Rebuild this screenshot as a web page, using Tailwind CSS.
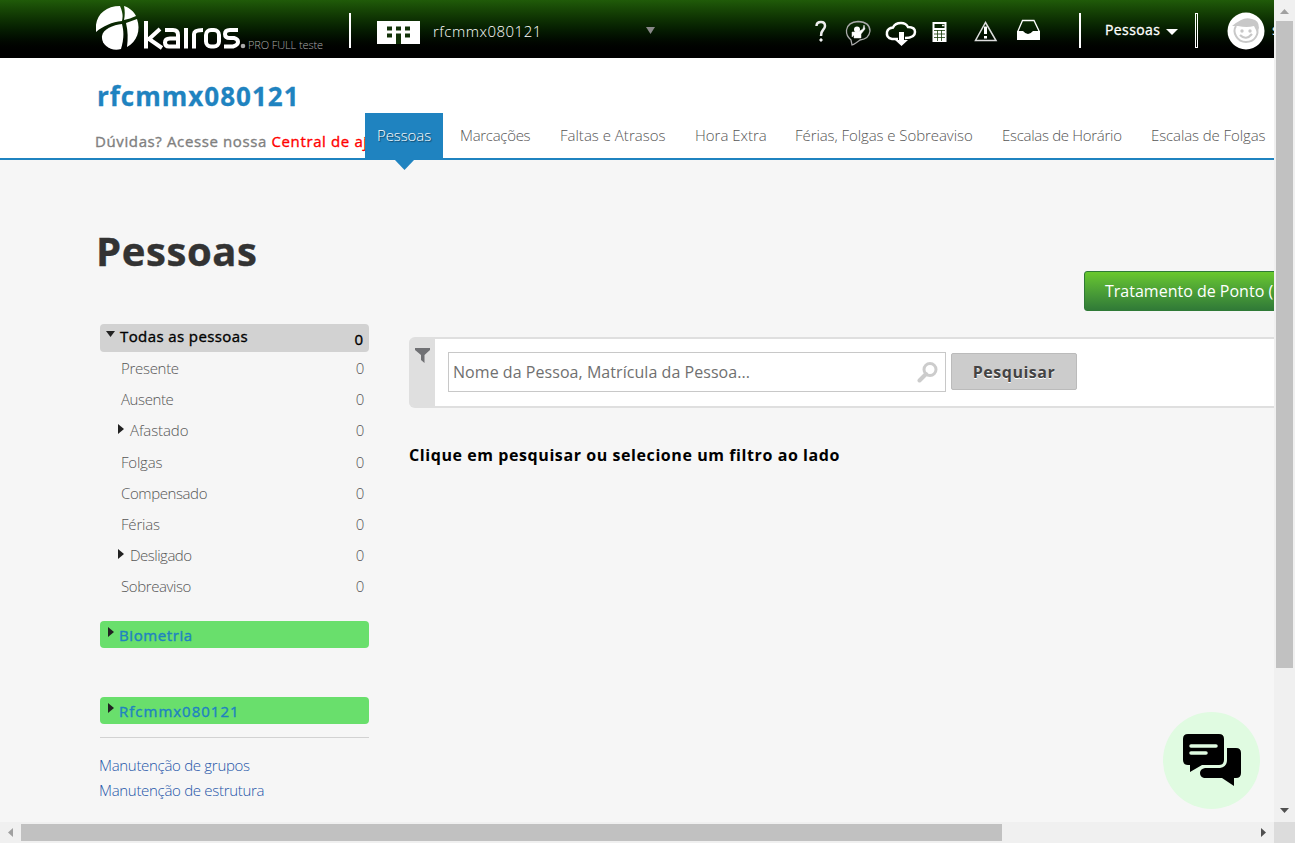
<!DOCTYPE html>
<html lang="pt-BR">
<head>
<meta charset="utf-8">
<title>Kairos - Pessoas</title>
<script src="https://cdn.jsdelivr.net/npm/@tailwindcss/browser@4"></script>
</head>
<body class="h-[843px] w-[1295px] overflow-hidden bg-[#f6f6f6] font-['Open_Sans','Noto_Sans',sans-serif]">
<div class="grid h-[843px] w-[1295px] grid-cols-[1274px_21px] grid-rows-[822px_21px] whitespace-nowrap">
  <div class="relative min-w-0 overflow-hidden">
    <header class="flex h-[58px] items-start overflow-hidden bg-linear-to-b from-[#205b09] to-black pl-24 text-white">
      <div class="flex w-[253px] shrink-0 items-start">
        <svg class="mt-[5px] h-[46px] w-[150px] shrink-0" viewBox="0 0 150 46" fill="none">
          <path d="M0 27C-2 12 8 1 24 1C27 8 27 11 26 16C16 17 7 21 0 27Z" fill="#fff"/>
          <path d="M28 1C34 3 38 7 40 11C36 13 32 14 28 15C29 10 29 6 28 1Z" fill="#fff"/>
          <path d="M26 19C28 27 28 34 25 44C15 47 5 40 6 31C7 24 17 20 26 19Z" fill="#fff"/>
          <path d="M30 18L41 14C45 25 41 37 31 42C32 34 32 26 30 18Z" fill="#fff"/>
          <g stroke="#fff" stroke-width="4">
            <path d="M50 16V43.500M64 24L53 34L66 43M69 25H77Q82 25 82 30V41.500H73Q69 41.500 69 37.500T74 33.500H82M90 23V43.500M98 43.500V29Q98 25 107 25"/>
            <rect x="110" y="25" width="13" height="16.500" rx="5"/>
            <path d="M142 25H134Q129 25 129 29T134 33H138Q142 34 142 37T137 41.500H128"/>
          </g>
          <circle cx="147" cy="41" r="2.300" fill="#aaa"/>
        </svg>
        <span class="mt-[37px] ml-0.5 text-[11px] leading-4 font-light tracking-[-0.1px] text-[#aaa]">PRO FULL teste</span>
      </div>
      <i class="mt-[13px] h-[35px] w-0.5 shrink-0 bg-white"></i>
      <svg class="mt-[21px] ml-[26px] h-[23px] w-[43px] shrink-0" viewBox="0 0 43 23"><rect width="43" height="23" fill="#fff"/><path fill="#123208" d="M10 5.500H15V9.500H10ZM19 5.500H24V9.500H19ZM28 5.500H33V9.500H28ZM10 12.500H15V16.500H10ZM28 12.500H33V16.500H28ZM19 12.500H24V23H19Z"/></svg>
      <span class="mt-[21px] ml-[13px] w-[213px] shrink-0 text-[15px] leading-5 font-light tracking-[0.5px]">rfcmmx080121</span>
      <svg class="mt-[27px] h-[7px] w-[9px] shrink-0" viewBox="0 0 9 7"><path d="M0 0H9L4.500 7Z" fill="#888"/></svg>
      <svg class="mt-[17px] mr-8 ml-[158px] h-[30px] w-[230px] shrink-0" viewBox="0 0 230 30" fill="none" stroke="#eee">
        <path d="M3.500 9Q3.500 5 8 5Q12 5 12 9Q12 11 10 13Q8 15 8 19" stroke-width="2.500"/><circle cx="8" cy="23" r="1.200" fill="#fff"/>
        <path d="M38 23Q33 19 33.500 13Q35 5 45 4.500Q57 5 57 14Q56 22 47 23Q42 27 39 28Z" stroke="#aaa" stroke-width="1.300"/><circle cx="44" cy="12.500" r="3" fill="#fff" stroke="none"/><path d="M39 15H45L50 12L51 8L52 12L48 17V21H41V18L39 20Z" fill="#fff" stroke-width=".5"/>
        <path d="M85 22H79Q73 21 74 15Q75 11 80 10.500Q82 6 88 6Q93 6 95 10Q102 10 102 15Q102 21 92 21" stroke="#fff" stroke-width="2.500"/><path d="M86 15H91V23H95L88.500 29L82 23H86Z" fill="#fff" stroke="none"/>
        <path d="M119.500 5H133.500V25H119.500ZM121.500 7V11H131.500V7Z" fill="#fff" fill-rule="evenodd" stroke="none"/><path d="M121 13.500H132M121 17H132M121 20.500H132M124.500 13V24M128.500 13V24" stroke="#163b08" stroke-width=".8"/><path d="M129 8.500H131.500" stroke-width="1.500"/>
        <path d="M172.500 5.500L183 23.500H162.500Z" stroke="#ddd" stroke-width="1.500"/><path d="M172.500 9.500V17M172.500 19V21.500" stroke="#fff" stroke-width="3"/>
        <path d="M205 14L209.500 3.500H221L226 14V22H205Z" stroke="#fff" stroke-width="1.300"/><path d="M204 14H210Q215 20 220 14H227V23H204Z" fill="#fff" stroke="none"/>
      </svg>
      <i class="mt-[13px] ml-1 h-[35px] w-0.5 shrink-0 bg-white"></i>
      <span class="mt-[20px] ml-6 w-[61px] shrink-0 text-[14px] leading-5 tracking-[0.4px] [-webkit-text-stroke:0.3px]">Pessoas</span>
      <svg class="mt-[29px] h-[6px] w-[12px] shrink-0" viewBox="0 0 12 6"><path d="M0 0H12L6 6Z" fill="#fff"/></svg>
      <i class="mt-[13px] ml-[17px] h-[35px] w-[3px] shrink-0 border border-white"></i>
      <svg class="mt-[12px] ml-[29px] size-[38px] shrink-0" viewBox="0 0 38 38" fill="none"><circle cx="19" cy="19" r="18.500" fill="#fff"/><path d="M5 14Q10 10 14 8Q19 5 25 7Q32 8 32 16L30 20L27 14Q20 16 11 14Z" fill="#c8c8c8"/><path d="M9 14C5 20 10 30 19 30C28 30 32 22 30 16" stroke="#c8c8c8" stroke-width="2"/><path d="M13 23Q19 29 25 22" stroke="#c8c8c8" stroke-width="2.200"/><circle cx="15" cy="19" r="1.700" fill="#c8c8c8"/><circle cx="23" cy="19" r="1.700" fill="#c8c8c8"/></svg>
      <span class="mt-[20px] ml-[7px] text-[14px] leading-5">s</span>
    </header>
    <div class="flex h-[102px] border-b-2 border-[#1f83c0] bg-white">
      <div class="w-[365px] shrink-0 overflow-hidden pl-[97px]">
        <h2 class="mt-[20px] text-[26px] leading-9 font-bold tracking-[1px] text-[#1f83c0] [-webkit-text-stroke:0.3px]">rfcmmx080121</h2>
        <p class="-ml-0.5 mt-[17px] text-[15px] leading-5 tracking-[0.62px] text-[#808080] [-webkit-text-stroke:0.35px]">Dúvidas? Acesse nossa <span class="text-[#f00]">Central de ajuda</span></p>
      </div>
      <nav class="mt-[55px] flex h-[45px] items-start text-[15px] leading-[45px] font-light text-[#555]">
        <a class="relative h-[45px] w-[78px] bg-[#1f83c0] pl-3 tracking-[-0.1px] text-white [text-shadow:1px_1px_1px_#0008]">Pessoas<svg class="absolute top-[45px] left-[29px] h-[12px] w-[21px]" viewBox="0 0 21 12"><path d="M0 1H21L10.500 12Z" fill="#1f83c0"/></svg></a>
        <a class="ml-[17px] w-[100px] tracking-[-0.3px]">Marcações</a>
        <a class="w-[135px]">Faltas e Atrasos</a>
        <a class="w-[100px]">Hora Extra</a>
        <a class="w-[207px] tracking-[-0.07px]">Férias, Folgas e Sobreaviso</a>
        <a class="w-[149px] tracking-[-0.3px]">Escalas de Horário</a>
        <a class="tracking-[-0.1px]">Escalas de Folgas</a>
      </nav>
    </div>
    <main class="flex">
      <aside class="ml-[97px] w-[272px] shrink-0">
        <h1 class="mt-[66px] -ml-px text-[40px] leading-[50px] font-bold tracking-[0.6px] text-[#333] [-webkit-text-stroke:0.4px]">Pessoas</h1>
        <div class="mt-[48px] ml-[3px] flex h-7 items-start rounded bg-[#d2d2d2] pr-1.5 pl-1.5 text-[15px] leading-[25px] text-black [-webkit-text-stroke:0.35px]">
          <svg class="mt-[7px] mr-[5px] h-[6px] w-[9px]" viewBox="0 0 9 6"><path d="M0 0H9L4.500 6Z" fill="#222"/></svg>
          <span class="flex-1 tracking-[0.4px]">Todas as pessoas</span><span class="mt-[3px]">0</span>
        </div>
        <ul class="mt-[1px] ml-6 pr-[5px] text-[15px] leading-[31.200px] font-light tracking-[-0.4px] text-[#555]">
          <li class="flex justify-between"><span class="tracking-[-0.3px]">Presente</span><span>0</span></li>
          <li class="flex justify-between"><span>Ausente</span><span>0</span></li>
          <li class="-ml-[3px] flex"><svg class="mt-[9px] mr-[6px] h-[10px] w-[6px]" viewBox="0 0 6 10"><path d="M0 0L6 5L0 10Z" fill="#222"/></svg><span class="flex-1 tracking-[-0.1px]">Afastado</span><span>0</span></li>
          <li class="flex justify-between"><span class="tracking-[-0.2px]">Folgas</span><span>0</span></li>
          <li class="flex justify-between"><span>Compensado</span><span>0</span></li>
          <li class="flex justify-between"><span class="tracking-[-0.2px]">Férias</span><span>0</span></li>
          <li class="-ml-[3px] flex"><svg class="mt-[9px] mr-[6px] h-[10px] w-[6px]" viewBox="0 0 6 10"><path d="M0 0L6 5L0 10Z" fill="#222"/></svg><span class="flex-1 tracking-[-0.5px]">Desligado</span><span>0</span></li>
          <li class="flex justify-between"><span>Sobreaviso</span><span>0</span></li>
        </ul>
        <div class="mt-[18px] ml-[3px] flex h-[27px] rounded bg-[#69df6c] pl-2 text-[15px] leading-7 tracking-[0.6px] text-[#1f83c0] [-webkit-text-stroke:0.4px]"><svg class="mt-[6px] mr-[5px] h-[10px] w-[6px]" viewBox="0 0 6 10"><path d="M0 0L6 5L0 10Z" fill="#222"/></svg>Biometria</div>
        <div class="mt-[49px] ml-[3px] flex h-[27px] rounded bg-[#69df6c] pl-2 text-[15px] leading-7 tracking-[1px] text-[#1f83c0] [-webkit-text-stroke:0.4px]"><svg class="mt-[6px] mr-[5px] h-[10px] w-[6px]" viewBox="0 0 6 10"><path d="M0 0L6 5L0 10Z" fill="#222"/></svg>Rfcmmx080121</div>
        <div class="mt-[13px] ml-[3px] border-t border-[#d2d2d2]"></div>
        <div class="mt-[15px] ml-0.5 text-[15px] leading-[25px] font-light tracking-[-0.3px] text-[#1e55a8]"><a class="block">Manutenção de grupos</a><a class="block">Manutenção de estrutura</a></div>
      </aside>
      <section class="ml-10 min-w-0 flex-1">
        <div class="mt-[111px] ml-[675px] h-10 w-[260px] rounded-[3px] border border-[#2f7a36] bg-linear-to-b from-[#69c82d] to-[#307a37] pl-5 text-[16px] leading-[38px] text-white">Tratamento de Ponto (</div>
        <div class="mt-[26px] flex h-[71px] w-[900px] rounded-md border-y-2 border-[#dfdfdf] bg-white">
          <div class="flex w-[26px] justify-center rounded-l bg-[#dfdfdf] pt-[9px] pl-px"><svg class="h-[15px] w-[15px]" viewBox="0 0 15 15"><path d="M0 0H15V2L9.500 7V15L6 12V7L0 2Z" fill="#707174"/></svg></div>
          <div class="mt-[13px] ml-[13px] flex h-10 w-[498px] items-center border border-[#c8c8c8] pr-[7px] pl-1 text-[16px] tracking-[0.05px] text-[#707070]"><span class="flex-1">Nome da Pessoa, Matrícula da Pessoa...</span>
            <svg class="h-[22px] w-[22px]" viewBox="0 0 22 22" fill="none" stroke="#ccc"><circle cx="14" cy="8.500" r="6" stroke-width="3"/><path d="M10 13L3.500 19.500" stroke-width="4" stroke-linecap="round"/></svg></div>
          <div class="mt-[14px] ml-[5px] h-[37px] w-[126px] rounded-[2px] border border-[#bbb] bg-[#ccc] text-center text-[16px] leading-[36px] font-bold tracking-[0.5px] text-[#444] [text-shadow:0_1px_0_#fff]">Pesquisar</div>
        </div>
        <p class="mt-[35px] text-[16px] leading-6 font-bold tracking-[0.58px] text-black">Clique em pesquisar ou selecione um filtro ao lado</p>
      </section>
    </main>
    <div class="absolute top-[711.500px] left-[1163px] flex size-[97px] items-center justify-center rounded-full bg-[#e0fbe1]">
      <svg class="h-[54px] w-[60px]" viewBox="0 0 60 54"><path d="M6 1H37Q42 1 42 6V27Q42 32 37 32H20L8 39V32H6Q1 32 1 27V6Q1 1 6 1Z"/><path d="M45 15H54Q59 15 59 20V40Q59 45 54 45H52V53L40 45H22Q18 44 18 40Q18 36 23 35H38Q45 34 45 27Z"/><path d="M9 13H34M9 20H24" stroke="#e0fbe1" stroke-width="3.500" stroke-linecap="round"/></svg>
    </div>
  </div>
  <div class="flex h-[822px] flex-col items-center bg-[#f0f0f0]">
    <svg class="mt-[9px] h-[5px] w-[9px] shrink-0" viewBox="0 0 9 5"><path d="M0 5L4.500 0L9 5Z" fill="#a0a0a0"/></svg>
    <div class="mt-[7px] h-[647px] w-[17px] bg-[#c1c1c1]"></div>
    <svg class="mt-[140px] h-[5px] w-[9px] shrink-0" viewBox="0 0 9 5"><path d="M0 0L4.500 5L9 0Z" fill="#505050"/></svg>
  </div>
  <div class="flex h-[21px] items-center bg-[#f0f0f0]">
    <svg class="ml-2 h-[9px] w-[5px] shrink-0" viewBox="0 0 5 9"><path d="M5 0L0 4.500L5 9Z" fill="#a0a0a0"/></svg>
    <div class="ml-2 h-[17px] w-[981px] bg-[#c1c1c1]"></div>
    <svg class="ml-[259px] h-[9px] w-[5px] shrink-0" viewBox="0 0 5 9"><path d="M0 0L5 4.500L0 9Z" fill="#505050"/></svg>
  </div>
  <div class="bg-[#dcdcdc]"></div>
</div>
</body>
</html>
